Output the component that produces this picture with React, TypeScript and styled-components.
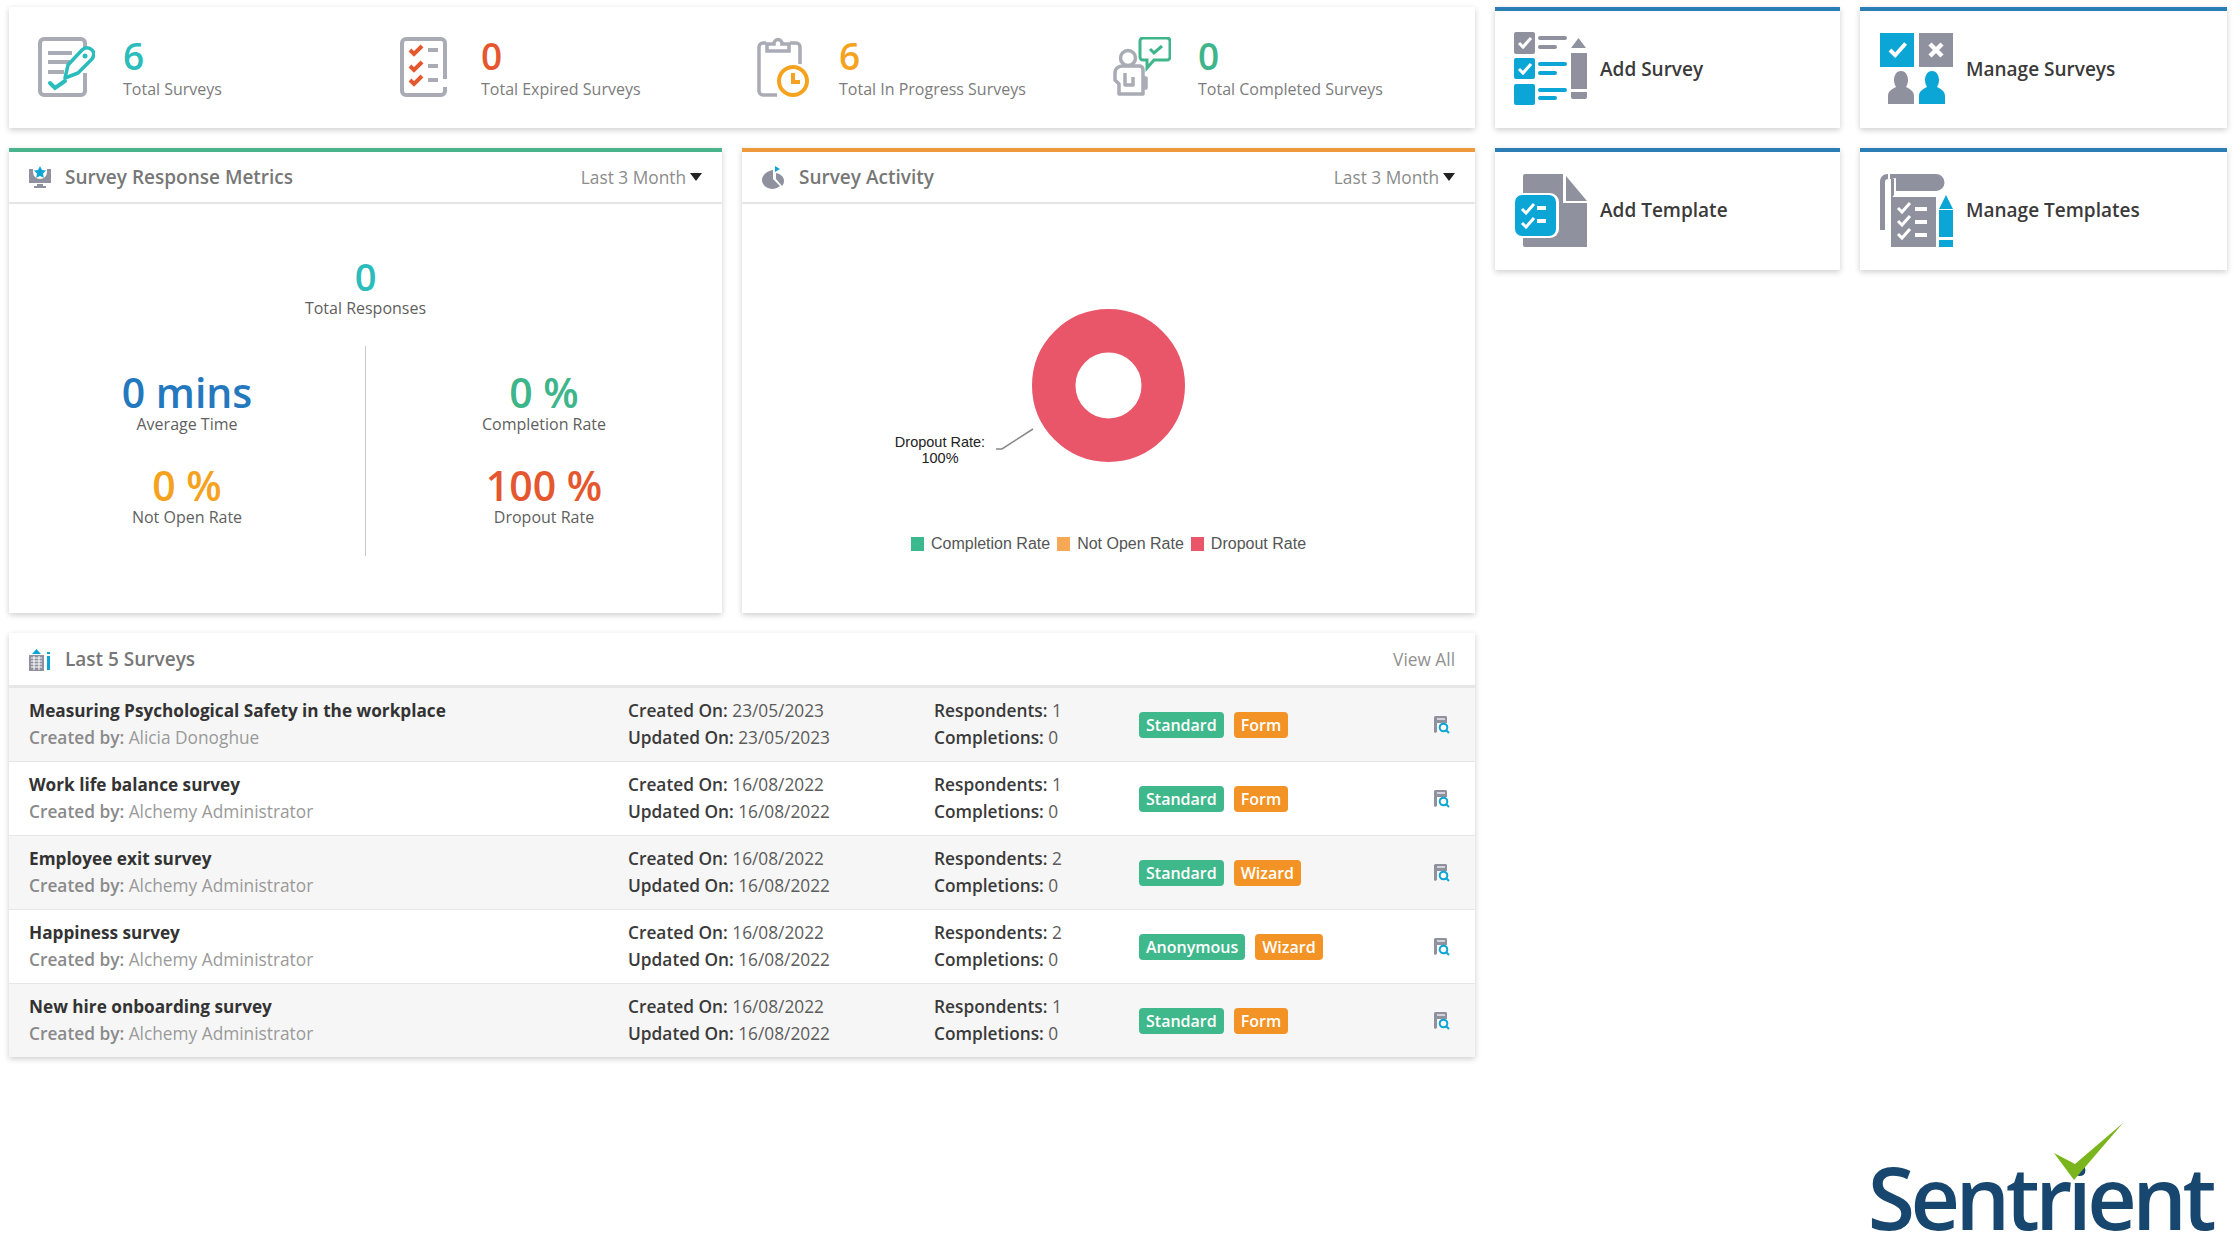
import React from "react";
import styled, { createGlobalStyle } from "styled-components";

const GREY = "#8f919e";
const SKY = "#0ca6d6";

const GlobalStyle = createGlobalStyle`
    html, body {
        margin: 0;
        padding: 0;
        background: #fff;
    }
    body {
        font-family: "Open Sans", "Noto Sans", sans-serif;
        color: #333;
    }
    * {
        box-sizing: border-box;
    }
`;

// STYLES
const Page = styled.div`
    display: flex;
    gap: 20px;
    height: 1260px;
    padding: 7px 13px 0 9px;
    overflow: hidden;
`;

const MainColumn = styled.div`
    display: flex;
    flex-direction: column;
    gap: 20px;
    width: 1466px;
    flex: none;
`;

const SideColumn = styled.div`
    display: flex;
    flex-direction: column;
    flex: 1;
`;

const Card = styled.section<{ $accent?: string }>`
    background: #fff;
    box-shadow: 0 2px 6px rgba(0, 0, 0, 0.2);
    border-top: ${(p) => (p.$accent ? `4px solid ${p.$accent}` : "none")};
`;

const StatsBar = styled(Card)`
    display: grid;
    grid-template-columns: 362px 357px 354px 1fr;
    height: 121px;
    padding: 30px 0 0 29px;
`;

const Stat = styled.div<{ $iconWidth: number }>`
    display: grid;
    grid-template-columns: ${(p) => p.$iconWidth}px 1fr;
    align-items: start;
`;

const StatValue = styled.div<{ $color: string }>`
    font-size: 37px;
    font-weight: 600;
    line-height: 38px;
    color: ${(p) => p.$color};
`;

const StatLabel = styled.div`
    margin-top: 3px;
    font-size: 16px;
    line-height: 22px;
    color: #7c7c7c;
`;

const PanelRow = styled.div`
    display: grid;
    grid-template-columns: 713px 733px;
    gap: 20px;
`;

const Panel = styled(Card)`
    height: 465px;
`;

const PanelHeader = styled.header<{ $tall?: boolean }>`
    display: flex;
    align-items: center;
    gap: 14px;
    height: ${(p) => (p.$tall ? "54px" : "52px")};
    padding: 0 20px;
    border-bottom: 2px solid #e6e6e6;
`;

const PanelTitle = styled.h2`
    flex: 1;
    margin: 0;
    font-size: 19px;
    font-weight: 600;
    color: #777;
`;

const RangeButton = styled.div`
    display: flex;
    align-items: center;
    gap: 4px;
    font-size: 17.3px;
    color: #8c8c8c;
`;

const Caret = styled.span`
    width: 0;
    height: 0;
    border-left: 6.5px solid transparent;
    border-right: 6.5px solid transparent;
    border-top: 8px solid #222;
`;

const Metrics = styled.div`
    display: flex;
    flex-direction: column;
    align-items: center;
    padding-top: 50px;
`;

const MetricGrid = styled.div`
    display: grid;
    grid-template-columns: 356px 1fr;
    width: 100%;
    height: 210px;
    margin-top: 28px;
`;

const MetricColumn = styled.div<{ $divided?: boolean }>`
    display: flex;
    flex-direction: column;
    gap: 29px;
    padding-top: 24px;
    border-left: ${(p) => (p.$divided ? "1px solid #c9c9c9" : "none")};
`;

const Metric = styled.div`
    text-align: center;
`;

const MetricValue = styled.div<{ $color: string; $size?: number }>`
    font-size: ${(p) => p.$size ?? 41}px;
    font-weight: 600;
    line-height: 44px;
    color: ${(p) => p.$color};
`;

const MetricLabel = styled.div`
    font-size: 16px;
    line-height: 20px;
    color: #5f5f5f;
`;

const ChartBox = styled.svg`
    display: block;
    width: 100%;
    height: 320px;
`;

const Legend = styled.div`
    display: flex;
    justify-content: center;
    gap: 7px;
    margin-top: 10px;
    font-family: "Liberation Sans", Arial, sans-serif;
    font-size: 16px;
    line-height: 20px;
    color: #555;
`;

const LegendItem = styled.div<{ $color: string }>`
    display: flex;
    align-items: center;
    gap: 7px;
    &::before {
        content: "";
        width: 13px;
        height: 14px;
        background: ${(p) => p.$color};
    }
`;

const ViewAll = styled.a`
    font-size: 17.3px;
    color: #909090;
`;

const SurveyRow = styled.div<{ $shaded: boolean }>`
    display: grid;
    grid-template-columns: 599px 306px 205px 1fr 16px;
    align-items: center;
    height: 74px;
    padding: 0 25px 0 20px;
    background: ${(p) => (p.$shaded ? "#f6f6f6" : "#fff")};
    border-top: 1px solid #e6e6e6;
    font-size: 17.3px;
    line-height: 26.5px;
    color: #5c5c5c;
`;

const SurveyName = styled.div`
    font-size: 17.2px;
    font-weight: 700;
    color: #333;
`;

const Creator = styled.div`
    color: #9a9a9a;
    b {
        font-weight: 600;
        color: #8a8a8a;
    }
`;

const Fact = styled.div`
    b {
        font-weight: 600;
        color: #3a3a3a;
    }
`;

const Badges = styled.div`
    display: flex;
    gap: 10px;
`;

const Badge = styled.span<{ $color: string }>`
    padding: 0 7px;
    height: 26px;
    border-radius: 4px;
    background: ${(p) => p.$color};
    font-size: 16px;
    font-weight: 600;
    line-height: 26px;
    color: #fff;
`;

const TileGrid = styled.div`
    display: grid;
    grid-template-columns: 345px 367px;
    grid-template-rows: 121px 122px;
    gap: 20px;
`;

const Tile = styled(Card)`
    display: flex;
    align-items: center;
    gap: 13px;
    padding: 0 0 2px 19px;
    font-size: 19px;
    font-weight: 600;
    color: #3a3a3a;
    &:nth-child(even) {
        padding-left: 20px;
    }
`;

const LogoBlock = styled.div`
    position: relative;
    align-self: flex-end;
    margin-top: auto;
    padding: 0 15px 11px 0;
`;

const LogoText = styled.div`
    font-size: 86px;
    font-weight: 600;
    line-height: 104px;
    letter-spacing: -4.5px;
    color: #17466f;
`;

const LogoCheck = styled.svg`
    position: absolute;
    top: -22px;
    left: 186px;
    width: 69px;
    height: 57px;
`;

// ICONS
const Svg: React.FC<{ w: number; h: number; children: React.ReactNode }> = ({ w, h, children }) => (
    <svg width={w} height={h} viewBox={`0 0 ${w} ${h}`} style={{ flex: "none" }}>
        {children}
    </svg>
);

const TotalIcon = () => (
    <Svg w={57} h={60}>
        <path d="M47 17V6a4 4 0 0 0-4-4H6a4 4 0 0 0-4 4v48a4 4 0 0 0 4 4h37a4 4 0 0 0 4-4V36" fill="none" stroke="#a9abb5" strokeWidth="4" />
        <path d="M10 16h24M10 25h27M10 35h16" stroke="#a9abb5" strokeWidth="4" fill="none" />
        <path d="M12 46l5 5 10-7" stroke="#2bbcbc" strokeWidth="4" fill="none" strokeLinecap="round" />
        <path d="M27 41l3-13L44 13c3-3 7-3 10 0s2 6 0 9L40 36z" fill="#fff" stroke="#2bbcbc" strokeWidth="3.5" strokeLinejoin="round" />
        <circle cx="47" cy="19" r="2.5" fill="#2bbcbc" />
    </Svg>
);

const ExpiredIcon = () => (
    <Svg w={47} h={60}>
        <path d="M45 42V6a4 4 0 0 0-4-4H6a4 4 0 0 0-4 4v48a4 4 0 0 0 4 4h35a4 4 0 0 0 4-4v-4" fill="none" stroke="#a9abb5" strokeWidth="4" />
        {[13, 29, 43].map((y) => (
            <g key={y}>
                <path d={`M10 ${y}l4 4 8-8`} stroke="#e5582f" strokeWidth="4" fill="none" />
                <path d={`M28 ${y}h10`} stroke="#a9abb5" strokeWidth="4" />
            </g>
        ))}
    </Svg>
);

const ProgressIcon = () => (
    <Svg w={52} h={60}>
        <path d="M9 6H6a4 4 0 0 0-4 4v44a4 4 0 0 0 4 4h14M33 6h6a4 4 0 0 1 4 4v17" fill="none" stroke="#a9abb5" strokeWidth="3.5" />
        <path d="M10 14V7h7c0-6 8-6 8 0h7v7z" fill="none" stroke="#a9abb5" strokeWidth="3.5" />
        <circle cx="36" cy="44" r="14" fill="#fff" stroke="#f5a31f" strokeWidth="4" />
        <path d="M36 36v9h7" fill="none" stroke="#f5a31f" strokeWidth="4" />
    </Svg>
);

const CompletedIcon = () => (
    <Svg w={60} h={60}>
        <path d="M32 1h24a3 3 0 0 1 3 3v16a3 3 0 0 1-3 3H43l-7 8v-8h-4a3 3 0 0 1-3-3V4a3 3 0 0 1 3-3z" fill="none" stroke="#3eb58a" strokeWidth="3" />
        <path d="M39 12l4 4 8-7" fill="none" stroke="#3eb58a" strokeWidth="3" />
        <circle cx="17" cy="21" r="7.5" fill="none" stroke="#a9abb5" strokeWidth="3.5" />
        <path d="M8 57V47l-4-4V36c0-5 4-7 8-7h16c3 0 4 2 4 4v24zM14 36v12h8l0-8M32 41h3v10h-3M8 57h20" fill="none" stroke="#a9abb5" strokeWidth="3.5" strokeLinejoin="round" />
    </Svg>
);

const MetricsIcon = () => (
    <Svg w={22} h={23}>
        <path d="M0 3h4v3a7 7 0 0 0 14 0V3h4v14H0z" fill={GREY} />
        <path d="M8 18h6v2h3v2H5v-2h3z" fill={GREY} />
        <path d="M11 0l2 4 4 .5-3 3 .8 4.3L11 10l-3.8 1.8L8 7.5l-3-3L9 4z" fill={SKY} />
    </Svg>
);

const ActivityIcon = () => (
    <Svg w={23} h={23}>
        <path d="M11 4v9l7 7a11 10 0 0 1-7 3C5 23 0 19 0 14S5 5 11 4z" fill={GREY} />
        <path d="M14 7c5 1 8 4 8 8 0 2-1 4-2 5l-6-7z" fill={GREY} />
        <path d="M13 0l5 3-5 3z" fill={SKY} />
    </Svg>
);

const ListIcon = () => (
    <Svg w={22} h={23}>
        <path d="M0 7h15v16H0z" fill={GREY} />
        <path d="M2 10h11M2 13h11M2 16h11M2 19h11M5 8v14M10 8v14" stroke="#fff" strokeWidth="1" />
        <path d="M3 6l4.500-5L12 6z" fill={SKY} />
        <path d="M18 4h3v2h-3zM18 8h3v14h-3z" fill={SKY} />
    </Svg>
);

const ViewIcon = () => (
    <Svg w={16} h={18}>
        <path d="M1 0h11l1 1v6H3v9l-2 1-1-1V1z" fill={GREY} />
        <path d="M3 3h8" stroke="#fff" strokeWidth="1.200" />
        <circle cx="9.500" cy="11.500" r="3.800" fill="#fff" stroke={SKY} strokeWidth="2" />
        <path d="M12 14l3 3" stroke={SKY} strokeWidth="2" />
    </Svg>
);

const CheckMark = ({ x, y, s = 1 }: { x: number; y: number; s?: number }) => (
    <path
        d={`M${x} ${y}l${4 * s} ${4 * s} ${8 * s} ${-9 * s}`}
        fill="none"
        stroke="#fff"
        strokeWidth={3 * s}
    />
);

const AddSurveyIcon = () => (
    <Svg w={73} h={73}>
        <rect x="0" y="0" width="21" height="22" rx="2" fill={GREY} />
        <CheckMark x={5} y={11} />
        <path d="M26 6h25M26 15h15" stroke={GREY} strokeWidth="4" strokeLinecap="round" />
        <rect x="0" y="26" width="21" height="21" rx="2" fill={SKY} />
        <CheckMark x={5} y={37} />
        <path d="M26 32h25M26 41h15" stroke={SKY} strokeWidth="4" strokeLinecap="round" />
        <rect x="0" y="52" width="21" height="21" rx="2" fill={SKY} />
        <path d="M26 58h25M26 66h15" stroke={SKY} strokeWidth="4" strokeLinecap="round" />
        <path d="M64.500 6L72 16H57zM57 21h16v36H57zM57 60h16v5a2 2 0 0 1-2 2H59a2 2 0 0 1-2-2z" fill={GREY} />
    </Svg>
);

const ManageSurveysIcon = () => (
    <Svg w={73} h={71}>
        <rect x="0" y="0" width="34" height="34" fill={SKY} />
        <CheckMark x={10} y={17} s={1.300} />
        <rect x="39" y="0" width="34" height="34" fill={GREY} />
        <path d="M50 11l12 12M62 11L50 23" stroke="#fff" strokeWidth="4.500" />
        <path d="M21 38c5 0 7 5 7 9 0 3-1 5-2 7 4 2 8 4 8 9v8H8v-8c0-5 4-7 8-9-1-2-2-4-2-7 0-4 2-9 7-9z" fill={GREY} />
        <path d="M52 38c5 0 7 5 7 9 0 3-1 5-2 7 4 2 8 4 8 9v8H39v-8c0-5 4-7 8-9-1-2-2-4-2-7 0-4 2-9 7-9z" fill={SKY} />
    </Svg>
);

const AddTemplateIcon = () => (
    <Svg w={73} h={73}>
        <path d="M9 2a2 2 0 0 1 2-2h38v29h24v44H11a2 2 0 0 1-2-2z" fill={GREY} />
        <path d="M52 2l21 25H52z" fill={GREY} />
        <rect x="-1" y="19" width="46" height="45" rx="9" fill="#fff" />
        <rect x="1" y="21" width="41" height="41" rx="7" fill={SKY} />
        <CheckMark x={8} y={35} />
        <CheckMark x={8} y={49} />
        <path d="M23 34h9M23 47h9" stroke="#fff" strokeWidth="4" />
    </Svg>
);

const ManageTemplatesIcon = () => (
    <Svg w={73} h={73}>
        <path d="M10 0h46a8.500 8.500 0 0 1 0 17H16V4c-2 0-3 1-4 1H10z" fill={GREY} />
        <path d="M0 8c0-5 3-8 8-8v5c-2 0-3 1-3 3v48H0z" fill={GREY} />
        <path d="M11 5h3v16l-3 4z" fill={GREY} />
        <rect x="11" y="23" width="45" height="50" fill={GREY} />
        {[34, 47, 60].map((y) => (
            <g key={y}>
                <CheckMark x={18} y={y} />
                <path d={`M35 ${y + 1}h12`} stroke="#fff" strokeWidth="4" />
            </g>
        ))}
        <path d="M66 21l7 14H59zM59 36h14v27H59zM59 66h14v7H59z" fill={SKY} />
    </Svg>
);

// DATA
const stats = [
    { value: 6, label: "Total Surveys", color: "#2bbcbc", iconWidth: 85, icon: <TotalIcon /> },
    { value: 0, label: "Total Expired Surveys", color: "#e5582f", iconWidth: 81, icon: <ExpiredIcon /> },
    { value: 6, label: "Total In Progress Surveys", color: "#f5a31f", iconWidth: 82, icon: <ProgressIcon /> },
    { value: 0, label: "Total Completed Surveys", color: "#3eb58a", iconWidth: 87, icon: <CompletedIcon /> },
];

const tiles = [
    { label: "Add Survey", icon: <AddSurveyIcon /> },
    { label: "Manage Surveys", icon: <ManageSurveysIcon /> },
    { label: "Add Template", icon: <AddTemplateIcon /> },
    { label: "Manage Templates", icon: <ManageTemplatesIcon /> },
];

const GREEN = "#3fb88c";
const ORANGE = "#f39325";

const surveys = [
    { name: "Measuring Psychological Safety in the workplace", by: "Alicia Donoghue", date: "23/05/2023", respondents: 1, kind: "Standard", mode: "Form" },
    { name: "Work life balance survey", by: "Alchemy Administrator", date: "16/08/2022", respondents: 1, kind: "Standard", mode: "Form" },
    { name: "Employee exit survey", by: "Alchemy Administrator", date: "16/08/2022", respondents: 2, kind: "Standard", mode: "Wizard" },
    { name: "Happiness survey", by: "Alchemy Administrator", date: "16/08/2022", respondents: 2, kind: "Anonymous", mode: "Wizard" },
    { name: "New hire onboarding survey", by: "Alchemy Administrator", date: "16/08/2022", respondents: 1, kind: "Standard", mode: "Form" },
];

// COMPONENT
const App: React.FC = () => {
    return (
        <Page>
            <GlobalStyle />
            <MainColumn>
                <StatsBar>
                    {stats.map((s) => (
                        <Stat key={s.label} $iconWidth={s.iconWidth}>
                            {s.icon}
                            <div>
                                <StatValue $color={s.color}>{s.value}</StatValue>
                                <StatLabel>{s.label}</StatLabel>
                            </div>
                        </Stat>
                    ))}
                </StatsBar>

                <PanelRow>
                    <Panel $accent="#4ab58d">
                        <PanelHeader>
                            <MetricsIcon />
                            <PanelTitle>Survey Response Metrics</PanelTitle>
                            <RangeButton>
                                Last 3 Month <Caret />
                            </RangeButton>
                        </PanelHeader>
                        <Metrics>
                            <Metric>
                                <MetricValue $color="#2bbcbc" $size={38}>0</MetricValue>
                                <MetricLabel>Total Responses</MetricLabel>
                            </Metric>
                            <MetricGrid>
                                <MetricColumn>
                                    <Metric>
                                        <MetricValue $color="#2478bd">0 mins</MetricValue>
                                        <MetricLabel>Average Time</MetricLabel>
                                    </Metric>
                                    <Metric>
                                        <MetricValue $color="#f5a31f">0 %</MetricValue>
                                        <MetricLabel>Not Open Rate</MetricLabel>
                                    </Metric>
                                </MetricColumn>
                                <MetricColumn $divided>
                                    <Metric>
                                        <MetricValue $color="#3eb58a">0 %</MetricValue>
                                        <MetricLabel>Completion Rate</MetricLabel>
                                    </Metric>
                                    <Metric>
                                        <MetricValue $color="#e5582f">100 %</MetricValue>
                                        <MetricLabel>Dropout Rate</MetricLabel>
                                    </Metric>
                                </MetricColumn>
                            </MetricGrid>
                        </Metrics>
                    </Panel>

                    <Panel $accent="#ee9a3c">
                        <PanelHeader>
                            <ActivityIcon />
                            <PanelTitle>Survey Activity</PanelTitle>
                            <RangeButton>
                                Last 3 Month <Caret />
                            </RangeButton>
                        </PanelHeader>
                        <ChartBox viewBox="0 0 733 320">
                            <circle cx="366.500" cy="181.500" r="54.750" fill="none" stroke="#ea5669" strokeWidth="43.500" />
                            <path d="M291 225L260 245H254" fill="none" stroke="#888" strokeWidth="1.500" />
                            <g fontFamily="Liberation Sans, Arial, sans-serif" fontSize="14.500" fill="#222" textAnchor="middle">
                                <text x="198" y="243">Dropout Rate:</text>
                                <text x="198" y="259">100%</text>
                            </g>
                        </ChartBox>
                        <Legend>
                            <LegendItem $color="#3cb88e">Completion Rate</LegendItem>
                            <LegendItem $color="#f6a855">Not Open Rate</LegendItem>
                            <LegendItem $color="#ea5669">Dropout Rate</LegendItem>
                        </Legend>
                    </Panel>
                </PanelRow>

                <Card>
                    <PanelHeader $tall>
                        <ListIcon />
                        <PanelTitle>Last 5 Surveys</PanelTitle>
                        <ViewAll>View All</ViewAll>
                    </PanelHeader>
                    {surveys.map((s, i) => (
                        <SurveyRow key={s.name} $shaded={i % 2 === 0}>
                            <div>
                                <SurveyName>{s.name}</SurveyName>
                                <Creator>
                                    <b>Created by:</b> {s.by}
                                </Creator>
                            </div>
                            <div>
                                <Fact>
                                    <b>Created On:</b> {s.date}
                                </Fact>
                                <Fact>
                                    <b>Updated On:</b> {s.date}
                                </Fact>
                            </div>
                            <div>
                                <Fact>
                                    <b>Respondents:</b> {s.respondents}
                                </Fact>
                                <Fact>
                                    <b>Completions:</b> 0
                                </Fact>
                            </div>
                            <Badges>
                                <Badge $color={GREEN}>{s.kind}</Badge>
                                <Badge $color={ORANGE}>{s.mode}</Badge>
                            </Badges>
                            <ViewIcon />
                        </SurveyRow>
                    ))}
                </Card>
            </MainColumn>

            <SideColumn>
                <TileGrid>
                    {tiles.map((t) => (
                        <Tile key={t.label} $accent="#2a7db5">
                            {t.icon}
                            {t.label}
                        </Tile>
                    ))}
                </TileGrid>
                <LogoBlock>
                    <LogoCheck viewBox="0 0 69 57">
                        <path d="M0 30L21 41 69 0 20 57z" fill="#7ab51d" />
                    </LogoCheck>
                    <LogoText>Sentrient</LogoText>
                </LogoBlock>
            </SideColumn>
        </Page>
    );
};

export default App;
